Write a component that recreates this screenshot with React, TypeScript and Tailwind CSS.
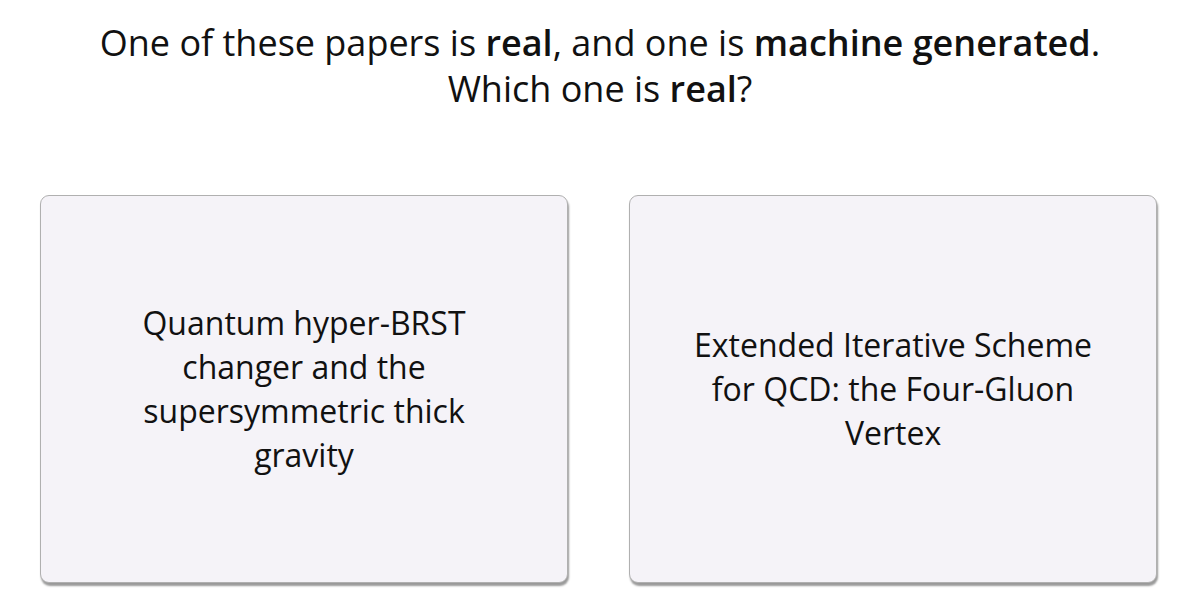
import React from "react";

type Paper = {
  id: number;
  title: string;
};

const PAPERS: Paper[] = [
  { id: 1, title: "Quantum hyper-BRST changer and the supersymmetric thick gravity" },
  { id: 2, title: "Extended Iterative Scheme for QCD: the Four-Gluon Vertex" },
];

function PaperCard({ paper }: { paper: Paper }) {
  return (
    <button className="flex h-[388px] w-[528px] cursor-pointer items-center justify-center rounded-[9px] border border-[#b0b0b0] bg-[#f5f3f8] px-[54px] text-center shadow-[1px_3px_2px_rgba(0,0,0,0.4)]">
      <span className="text-[32px] leading-[44px] text-[#111]">{paper.title}</span>
    </button>
  );
}

export default function App() {
  return (
    <div className="min-h-[600px] w-[1200px] bg-white font-['Open_Sans',sans-serif]">
      {/* Prompt */}
      <h1 className="pt-[20px] text-center text-[36px] leading-[46px] font-normal text-[#111]">
        One of these papers is <b className="font-semibold">real</b>, and one is{" "}
        <b className="font-semibold">machine generated</b>.
        <br />
        Which one is <b className="font-semibold">real</b>?
      </h1>

      {/* Choices */}
      <div className="mt-[83px] flex justify-center gap-[61px] pr-[3px]">
        {PAPERS.map((p) => (
          <PaperCard key={p.id} paper={p} />
        ))}
      </div>
    </div>
  );
}
